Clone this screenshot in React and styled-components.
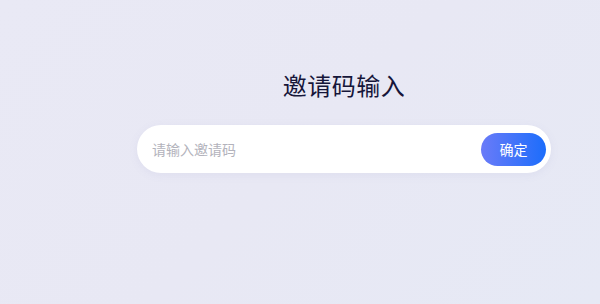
import React, { useState } from "react";
import styled, { createGlobalStyle } from "styled-components";

const GlobalStyle = createGlobalStyle`
  html, body {
    margin: 0;
    padding: 0;
  }
  body {
    font-family: "Noto Sans CJK SC", "Noto Sans", sans-serif;
  }
`;

const Page = styled.div`
  width: 600px;
  height: 304px;
  box-sizing: border-box;
  padding: 69px 49px 0 137px;
  background: linear-gradient(135deg, #e9e9f5 0%, #e8e8f4 50%, #e6e9f5 100%);
  overflow: hidden;
`;

const Panel = styled.div`
  width: 414px;
  display: flex;
  flex-direction: column;
  align-items: center;
`;

const Title = styled.h1`
  margin: 0;
  font-size: 24px;
  font-weight: 400;
  line-height: 32px;
  color: #16163a;
  letter-spacing: 0.5px;
`;

const SearchBar = styled.form`
  margin-top: 24px;
  width: 100%;
  height: 48px;
  box-sizing: border-box;
  display: flex;
  align-items: center;
  padding: 0 5px 0 15px;
  background: #ffffff;
  border-radius: 24px;
  box-shadow: 0 2px 10px rgba(120, 120, 180, 0.08);
`;

const CodeInput = styled.input`
  flex: 1;
  min-width: 0;
  padding: 0;
  border: none;
  outline: none;
  background: transparent;
  font-family: inherit;
  font-size: 14px;
  color: #333;

  &::placeholder {
    color: #b3b3bc;
  }
`;

const ConfirmButton = styled.button`
  width: 65px;
  height: 33px;
  border: none;
  border-radius: 17px;
  background: linear-gradient(90deg, #6a7bf8 0%, #1c6dfb 100%);
  color: #fff;
  font-family: inherit;
  font-size: 14px;
  cursor: pointer;
`;

export default function App() {
  const [code, setCode] = useState("");

  return (
    <>
      <GlobalStyle />
      <Page>
        <Panel>
          <Title>邀请码输入</Title>
          <SearchBar onSubmit={(e) => e.preventDefault()}>
            <CodeInput
              value={code}
              onChange={(e) => setCode(e.target.value)}
              placeholder="请输入邀请码"
            />
            <ConfirmButton type="submit">确定</ConfirmButton>
          </SearchBar>
        </Panel>
      </Page>
    </>
  );
}
